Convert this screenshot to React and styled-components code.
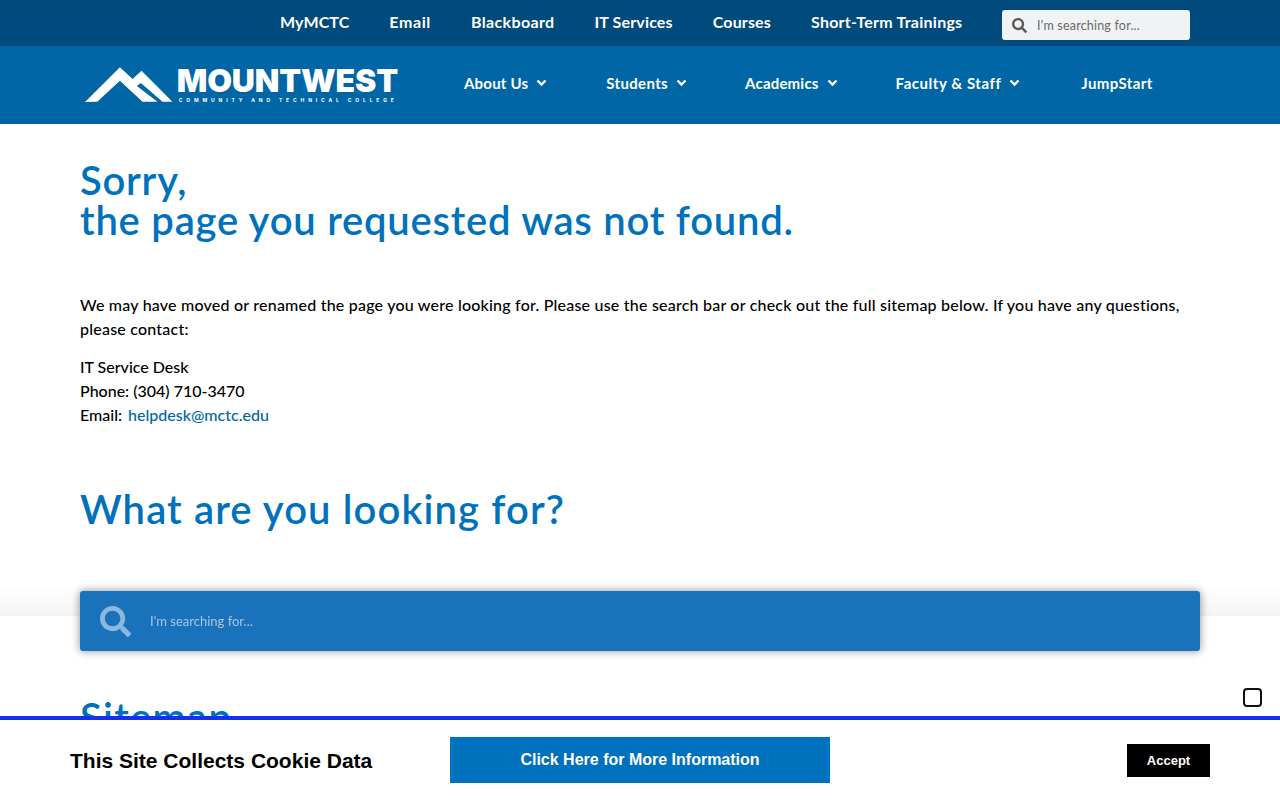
import React from "react";
import styled, { createGlobalStyle } from "styled-components";
import { FaSearch } from "react-icons/fa";

const GlobalStyle = createGlobalStyle`
    html, body {
        margin: 0;
        height: 800px;
        overflow: hidden;
        background: #fff;
        font-family: 'Lato', sans-serif;
    }
    * {
        box-sizing: border-box;
    }
`;

const TopBar = styled.div`
    height: 46px;
    background: #004a7c;
    display: flex;
    align-items: center;
    padding: 0 90px 0 260px;
`;

const TopLink = styled.a`
    padding: 0 20px;
    color: #fff;
    font-size: 16px;
    font-weight: 700;
    letter-spacing: ${(p) => p.$track}px;
    white-space: nowrap;
    margin-top: -4px;
`;

const TopSearch = styled.div`
    margin-left: auto;
    margin-top: 4px;
    flex-shrink: 0;
    width: 188px;
    height: 30px;
    background: #f1f2f4;
    border-radius: 3px;
    display: flex;
    align-items: center;
    gap: 10px;
    padding-left: 10px;
    color: #666a6d;
    font-size: 12.5px;
    letter-spacing: 0.2px;
`;

const MainNav = styled.div`
    height: 78px;
    background: #0066a6;
    display: flex;
    align-items: center;
    padding-left: 85px;
`;

const Logo = styled.div`
    width: 313px;
    height: 38px;
    display: flex;
    gap: 2px;
    flex-shrink: 0;
`;

const LogoText = styled.div`
    display: flex;
    flex-direction: column;
    color: #fff;
    font-family: 'Inter', sans-serif;
`;

const LogoName = styled.div`
    font-size: 32px;
    line-height: 29px;
    font-weight: 900;
    letter-spacing: -0.15px;
`;

const LogoSub = styled.div`
    margin: 2px 0 0 2px;
    font-size: 5px;
    line-height: 6px;
    font-weight: 700;
    letter-spacing: 3.85px;
    white-space: nowrap;
`;

const NavLinks = styled.div`
    display: flex;
    align-items: center;
    margin-left: 66px;
    padding-bottom: 4px;
`;

const NavLink = styled.a`
    display: flex;
    align-items: center;
    gap: 8px;
    color: #fff;
    font-size: 15px;
    font-weight: 700;
    letter-spacing: ${(p) => p.$track}px;
    white-space: nowrap;
    margin-right: ${(p) => p.$gap}px;
`;

const Content = styled.main`
    padding: 36px 80px 0;
`;

const Heading = styled.h1`
    margin: 0;
    font-size: 40px;
    line-height: 40px;
    font-weight: 600;
    letter-spacing: 0.76px;
    color: #0071bc;
`;

const Intro = styled.p`
    margin: 53px 0 0;
    font-size: 16px;
    line-height: 24px;
    font-weight: 500;
    letter-spacing: 0.21px;
    color: #000;
`;

const Contact = styled.p`
    margin: 14px 0 0;
    font-size: 16px;
    line-height: 24px;
    font-weight: 500;
    color: #000;
`;

const MailLink = styled.a`
    color: #0066a6;
    margin-left: 2px;
`;

const LookingHeading = styled(Heading)`
    margin-top: 62px;
    letter-spacing: 1.12px;
`;

const BigSearch = styled.div`
    position: relative;
    z-index: 2;
    margin-top: 62px;
    height: 60px;
    background: #1a72bb;
    border-radius: 3px;
    box-shadow: 0 0 8px rgba(0, 0, 0, 0.45);
    display: flex;
    align-items: center;
    gap: 19px;
    padding-left: 20px;
    color: #a5c7e5;
    font-size: 13px;
`;

const SitemapHeading = styled(Heading)`
    margin-top: 46px;
    letter-spacing: 1.3px;
`;

const Fade = styled.div`
    position: fixed;
    left: 0;
    right: 0;
    top: 586px;
    height: 30px;
    background: linear-gradient(rgba(240, 240, 240, 0), rgba(240, 240, 240, 0.75));
    z-index: 1;
`;

const CheckBox = styled.div`
    position: fixed;
    left: 1243px;
    top: 688px;
    width: 19px;
    height: 19px;
    border: 2px solid #111;
    border-radius: 4px;
    z-index: 3;
`;

const CookieBar = styled.div`
    position: fixed;
    left: 0;
    right: 0;
    bottom: 0;
    height: 84px;
    background: #fff;
    border-top: 4px solid #1232f0;
    display: flex;
    align-items: center;
    padding: 0 70px;
    font-family: 'Liberation Sans', Arial, sans-serif;
    z-index: 4;
`;

const CookieText = styled.div`
    width: 380px;
    margin-top: 2px;
    font-size: 21px;
    font-weight: 700;
    color: #000;
`;

const MoreButton = styled.a`
    width: 380px;
    height: 46px;
    background: #0071bc;
    color: #fff;
    font-size: 16px;
    font-weight: 700;
    display: flex;
    align-items: center;
    justify-content: center;
`;

const AcceptButton = styled.a`
    margin-left: auto;
    width: 83px;
    height: 33px;
    background: #000;
    color: #fff;
    font-size: 13px;
    font-weight: 700;
    display: flex;
    align-items: center;
    justify-content: center;
`;

const topLinks = [
    { label: "MyMCTC", track: 0.1 },
    { label: "Email", track: 0.6 },
    { label: "Blackboard", track: 0.35 },
    { label: "IT Services", track: 0.15 },
    { label: "Courses", track: 0.15 },
    { label: "Short-Term Trainings", track: 0.25 },
];

const navLinks = [
    { label: "About Us", arrow: true, gap: 59, track: 0.2 },
    { label: "Students", arrow: true, gap: 58, track: 0.35 },
    { label: "Academics", arrow: true, gap: 58, track: 0.2 },
    { label: "Faculty & Staff", arrow: true, gap: 61, track: 0.55 },
    { label: "JumpStart", arrow: false, gap: 0, track: 0.4 },
];

const Arrow = () => (
    <svg width="11" height="8" viewBox="0 0 11 8">
        <polyline points="1.5,1.5 5.5,5.5 9.5,1.5" fill="none" stroke="#fff" strokeWidth="2.4" />
    </svg>
);

const App = () => (
    <>
        <GlobalStyle />
        <TopBar>
            {topLinks.map((l) => (
                <TopLink key={l.label} $track={l.track}>{l.label}</TopLink>
            ))}
            <TopSearch>
                <FaSearch size={15} color="#5a5a5a" />
                I'm searching for...
            </TopSearch>
        </TopBar>
        <MainNav>
            <Logo>
                <svg width="90" height="37" viewBox="0 0 90 37">
                    <path d="M0 36 L35 1.3 L47.7 13 L56.7 4.7 L87.7 35.7 L77.7 35.7 L56 17 L52 20 L72.7 35.7 L57.7 35.7 L35 14.7 L12.3 35.7 Z" fill="#fff" />
                </svg>
                <LogoText>
                    <LogoName>MOUNTWEST</LogoName>
                    <LogoSub>COMMUNITY AND TECHNICAL COLLEGE</LogoSub>
                </LogoText>
            </Logo>
            <NavLinks>
                {navLinks.map((n) => (
                    <NavLink key={n.label} $gap={n.gap} $track={n.track}>
                        {n.label}
                        {n.arrow && <Arrow />}
                    </NavLink>
                ))}
            </NavLinks>
        </MainNav>
        <Content>
            <Heading>
                Sorry,
                <br />
                the page you requested was not found.
            </Heading>
            <Intro>
                We may have moved or renamed the page you were looking for. Please use the search bar or check out the full sitemap below. If you have any questions, please contact:
            </Intro>
            <Contact>
                IT Service Desk
                <br />
                Phone: (304) 710-3470
                <br />
                Email: <MailLink>helpdesk@mctc.edu</MailLink>
            </Contact>
            <LookingHeading>What are you looking for?</LookingHeading>
            <BigSearch>
                <FaSearch size={31} color="#8ab8df" />
                I'm searching for...
            </BigSearch>
            <SitemapHeading>Sitemap</SitemapHeading>
        </Content>
        <Fade />
        <CheckBox />
        <CookieBar>
            <CookieText>This Site Collects Cookie Data</CookieText>
            <MoreButton>Click Here for More Information</MoreButton>
            <AcceptButton>Accept</AcceptButton>
        </CookieBar>
    </>
);

export default App;
